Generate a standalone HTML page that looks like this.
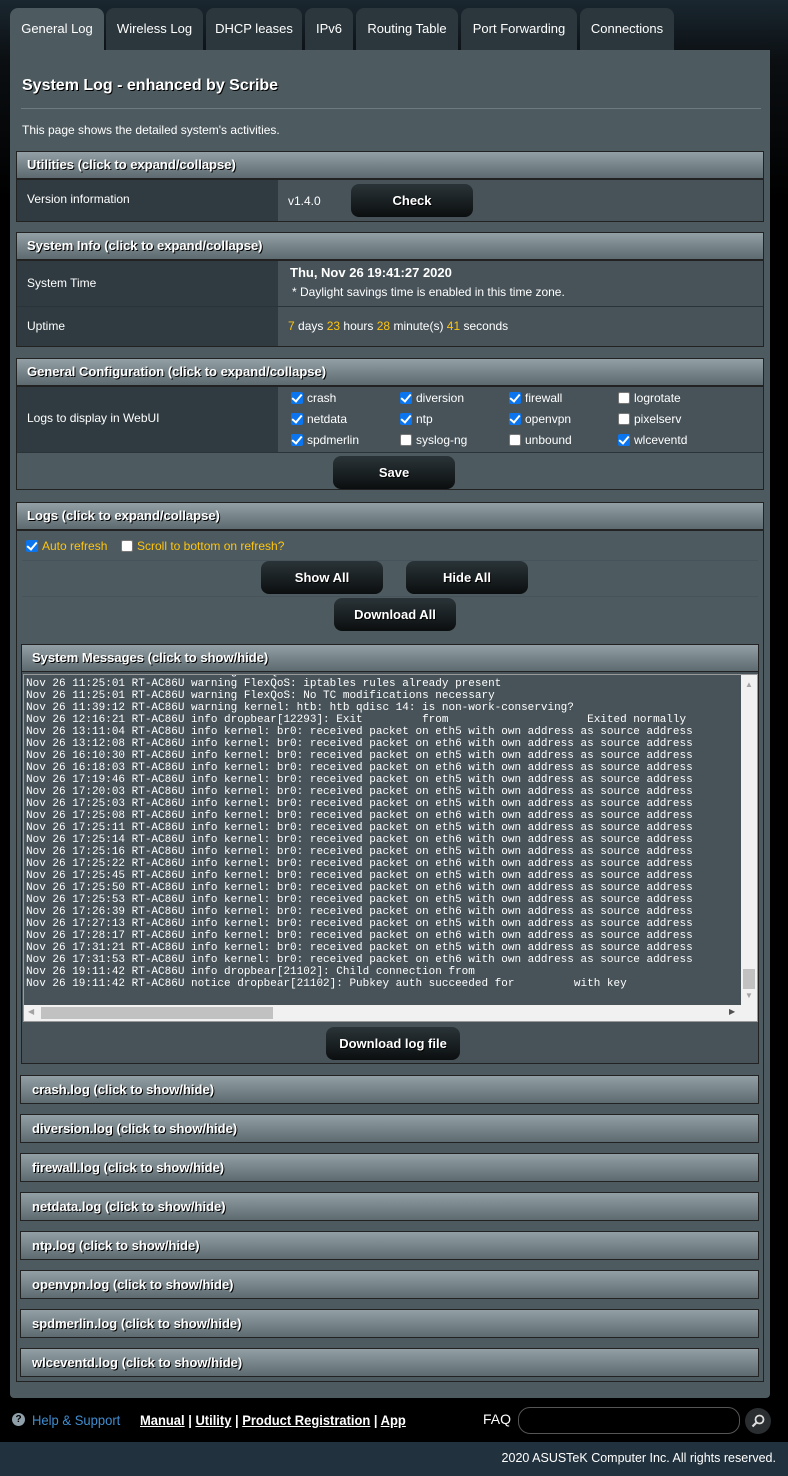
<!DOCTYPE html>
<html><head><meta charset="utf-8"><style>
*{box-sizing:border-box;margin:0;padding:0}
body{width:788px;height:1476px;background:#21313d;font-family:"Liberation Sans",Arial,sans-serif;color:#fff;position:relative;overflow:hidden}
.a{position:absolute}
.bgtop{left:0;top:0;width:788px;height:1442px;background:linear-gradient(180deg,#1a2730 0,#0b0f12 60px,#000 200px)}
.tab{top:8px;height:42px;background:#2b373c;border-radius:8px 8px 0 0;font-size:13px;line-height:42px;text-align:center;color:#fff}
.tab.on{background:#4d5a5f}
.main{left:10px;top:50px;width:760px;height:1348px;background:#4d5a5f;border-radius:0 0 4px 4px}
.hd{height:28px;background:linear-gradient(180deg,#929fa4,#5d6b71);border:1px solid #222;font-weight:bold;font-size:13px;line-height:26px;padding-left:10px;text-shadow:1px 1px 0 #000}
.box{border:1px solid #222}
.lc{background:#2f3b40;font-size:12px}
.rc{background:#475359;font-size:12px}
.btn{background:linear-gradient(180deg,#2a3438,#0b0e0f);border-radius:8px;font-weight:bold;font-size:13px;text-align:center;color:#fff;text-shadow:1px 1px 0 #000}
.cb{width:12px;height:12px;border-radius:2px;background:#0b75f0;display:inline-block;vertical-align:-2px;margin-right:4px;position:relative}
.cb:after{content:"";position:absolute;left:3px;top:0px;width:4px;height:8px;border:solid #fff;border-width:0 2px 2px 0;transform:rotate(40deg)}
.cb.off{background:#fff;border:1px solid #777}
.cb.off:after{display:none}
.ck{font-size:12px;position:absolute}
.log{font-family:"Liberation Mono",monospace;font-size:11px;line-height:12px;white-space:pre;color:#fff}
.bar{left:20px;width:739px;height:29px;background:linear-gradient(180deg,#929fa4,#5d6b71);border:1px solid #222;font-weight:bold;font-size:13px;line-height:27px;padding-left:11px;text-shadow:1px 1px 0 #000}
.y{color:#ffc40c}
u{color:#fff}
</style></head><body>
<div class="a bgtop"></div>
<div class="a tab on" style="left:10px;width:94px">General Log</div>
<div class="a tab" style="left:106px;width:97px">Wireless Log</div>
<div class="a tab" style="left:206px;width:96px">DHCP leases</div>
<div class="a tab" style="left:305px;width:48px">IPv6</div>
<div class="a tab" style="left:356px;width:102px">Routing Table</div>
<div class="a tab" style="left:461px;width:116px">Port Forwarding</div>
<div class="a tab" style="left:580px;width:94px">Connections</div>
<div class="a main"></div>
<div class="a" style="left:22px;top:77px;font-size:16px;font-weight:bold;text-shadow:1px 1px 0 #000">System Log - enhanced by Scribe</div>
<div class="a" style="left:21px;top:108px;width:740px;height:1px;background:#6d7a80"></div>
<div class="a" style="left:22px;top:123px;font-size:12px">This page shows the detailed system's activities.</div>

<div class="a hd" style="left:16px;top:151px;width:748px">Utilities (click to expand/collapse)</div>
<div class="a box" style="left:16px;top:179px;width:748px;height:43px;background:#475359"></div>
<div class="a lc" style="left:17px;top:180px;width:261px;height:41px;line-height:38px;padding-left:10px">Version information</div>
<div class="a" style="left:288px;top:194px;font-size:12px">v1.4.0</div>
<div class="a btn" style="left:351px;top:184px;width:122px;height:33px;line-height:33px">Check</div>

<div class="a hd" style="left:16px;top:232px;width:748px">System Info (click to expand/collapse)</div>
<div class="a box" style="left:16px;top:260px;width:748px;height:87px;background:#475359"></div>
<div class="a lc" style="left:17px;top:261px;width:261px;height:45px;line-height:44px;padding-left:10px">System Time</div>
<div class="a lc" style="left:17px;top:307px;width:261px;height:39px;line-height:38px;padding-left:10px">Uptime</div>
<div class="a" style="left:17px;top:306px;width:746px;height:1px;background:#2a3438"></div>
<div class="a" style="left:290px;top:265px;font-size:13px;font-weight:bold">Thu, Nov 26 19:41:27 2020</div>
<div class="a" style="left:292px;top:285px;font-size:12px">* Daylight savings time is enabled in this time zone.</div>
<div class="a" style="left:288px;top:319px;font-size:12px"><span class="y">7</span> days <span class="y">23</span> hours <span class="y">28</span> minute(s) <span class="y">41</span> seconds</div>

<div class="a hd" style="left:16px;top:358px;width:748px">General Configuration (click to expand/collapse)</div>
<div class="a box" style="left:16px;top:386px;width:748px;height:104px;background:#4d5a5f"></div>
<div class="a lc" style="left:17px;top:387px;width:261px;height:65px;line-height:62px;padding-left:10px">Logs to display in WebUI</div>
<div class="a rc" style="left:278px;top:387px;width:485px;height:65px"></div>
<div class="a" style="left:17px;top:452px;width:746px;height:1px;background:#2a3438"></div>
<div class="ck" style="left:291px;top:391px"><span class="cb"></span>crash</div>
<div class="ck" style="left:400px;top:391px"><span class="cb"></span>diversion</div>
<div class="ck" style="left:509px;top:391px"><span class="cb"></span>firewall</div>
<div class="ck" style="left:618px;top:391px"><span class="cb off"></span>logrotate</div>
<div class="ck" style="left:291px;top:412px"><span class="cb"></span>netdata</div>
<div class="ck" style="left:400px;top:412px"><span class="cb"></span>ntp</div>
<div class="ck" style="left:509px;top:412px"><span class="cb"></span>openvpn</div>
<div class="ck" style="left:618px;top:412px"><span class="cb off"></span>pixelserv</div>
<div class="ck" style="left:291px;top:433px"><span class="cb"></span>spdmerlin</div>
<div class="ck" style="left:400px;top:433px"><span class="cb off"></span>syslog-ng</div>
<div class="ck" style="left:509px;top:433px"><span class="cb off"></span>unbound</div>
<div class="ck" style="left:618px;top:433px"><span class="cb"></span>wlceventd</div>
<div class="a btn" style="left:333px;top:456px;width:122px;height:33px;line-height:33px">Save</div>

<div class="a hd" style="left:16px;top:502px;width:748px">Logs (click to expand/collapse)</div>
<div class="a box" style="left:16px;top:530px;width:748px;height:852px;background:#4d5a5f"></div>
<div class="ck y" style="left:26px;top:539px"><span class="cb"></span>Auto refresh</div>
<div class="ck y" style="left:121px;top:539px"><span class="cb off"></span>Scroll to bottom on refresh?</div>
<div class="a" style="left:22px;top:560px;width:736px;height:37px;border:1px solid #46535a;border-left:none;border-right:none"></div>
<div class="a btn" style="left:261px;top:561px;width:122px;height:33px;line-height:33px">Show All</div>
<div class="a btn" style="left:406px;top:561px;width:122px;height:33px;line-height:33px">Hide All</div>
<div class="a btn" style="left:334px;top:598px;width:122px;height:33px;line-height:33px">Download All</div>

<div class="a hd" style="left:21px;top:644px;width:738px">System Messages (click to show/hide)</div>
<div class="a" style="left:21px;top:672px;width:738px;height:392px;border:1px solid #222;border-top:none;background:#475359"></div>
<div class="a" style="left:23px;top:674px;width:735px;height:348px;border:1px solid #999;background:#475359;overflow:hidden">
<div class="a log" style="left:2px;top:-9px">Nov 26 11:24:59 RT-AC86U warning FlexQoS: xxxxxxxx xxxxx xxxxxxx xxxxxxx xxxxxxxx xxxxxxx
Nov 26 11:25:01 RT-AC86U warning FlexQoS: iptables rules already present
Nov 26 11:25:01 RT-AC86U warning FlexQoS: No TC modifications necessary
Nov 26 11:39:12 RT-AC86U warning kernel: htb: htb qdisc 14: is non-work-conserving?
Nov 26 12:16:21 RT-AC86U info dropbear[12293]: Exit         from                     Exited normally
Nov 26 13:11:04 RT-AC86U info kernel: br0: received packet on eth5 with own address as source address
Nov 26 13:12:08 RT-AC86U info kernel: br0: received packet on eth6 with own address as source address
Nov 26 16:10:30 RT-AC86U info kernel: br0: received packet on eth5 with own address as source address
Nov 26 16:18:03 RT-AC86U info kernel: br0: received packet on eth6 with own address as source address
Nov 26 17:19:46 RT-AC86U info kernel: br0: received packet on eth5 with own address as source address
Nov 26 17:20:03 RT-AC86U info kernel: br0: received packet on eth5 with own address as source address
Nov 26 17:25:03 RT-AC86U info kernel: br0: received packet on eth5 with own address as source address
Nov 26 17:25:08 RT-AC86U info kernel: br0: received packet on eth6 with own address as source address
Nov 26 17:25:11 RT-AC86U info kernel: br0: received packet on eth5 with own address as source address
Nov 26 17:25:14 RT-AC86U info kernel: br0: received packet on eth6 with own address as source address
Nov 26 17:25:16 RT-AC86U info kernel: br0: received packet on eth5 with own address as source address
Nov 26 17:25:22 RT-AC86U info kernel: br0: received packet on eth6 with own address as source address
Nov 26 17:25:45 RT-AC86U info kernel: br0: received packet on eth5 with own address as source address
Nov 26 17:25:50 RT-AC86U info kernel: br0: received packet on eth6 with own address as source address
Nov 26 17:25:53 RT-AC86U info kernel: br0: received packet on eth5 with own address as source address
Nov 26 17:26:39 RT-AC86U info kernel: br0: received packet on eth6 with own address as source address
Nov 26 17:27:13 RT-AC86U info kernel: br0: received packet on eth5 with own address as source address
Nov 26 17:28:17 RT-AC86U info kernel: br0: received packet on eth6 with own address as source address
Nov 26 17:31:21 RT-AC86U info kernel: br0: received packet on eth5 with own address as source address
Nov 26 17:31:53 RT-AC86U info kernel: br0: received packet on eth6 with own address as source address
Nov 26 19:11:42 RT-AC86U info dropbear[21102]: Child connection from
Nov 26 19:11:42 RT-AC86U notice dropbear[21102]: Pubkey auth succeeded for         with key</div>
<div class="a" style="left:717px;top:0;width:17px;height:330px;background:#f1f1f1"></div>
<div class="a" style="left:719px;top:294px;width:12px;height:20px;background:#c1c1c1"></div>
<div class="a" style="left:721px;top:5px;font-size:8px;color:#a3a3a3">▲</div>
<div class="a" style="left:721px;top:316px;font-size:8px;color:#a3a3a3">▼</div>
<div class="a" style="left:0;top:330px;width:734px;height:17px;background:#f1f1f1"></div>
<div class="a" style="left:17px;top:332px;width:232px;height:12px;background:#c1c1c1"></div>
<div class="a" style="left:4px;top:332px;font-size:8px;color:#a3a3a3">◀</div>
<div class="a" style="left:705px;top:332px;font-size:8px;color:#505050">▶</div>
</div>
<div class="a btn" style="left:326px;top:1027px;width:134px;height:33px;line-height:33px">Download log file</div>

<div class="a bar" style="top:1075px">crash.log (click to show/hide)</div>
<div class="a bar" style="top:1114px">diversion.log (click to show/hide)</div>
<div class="a bar" style="top:1153px">firewall.log (click to show/hide)</div>
<div class="a bar" style="top:1192px">netdata.log (click to show/hide)</div>
<div class="a bar" style="top:1231px">ntp.log (click to show/hide)</div>
<div class="a bar" style="top:1270px">openvpn.log (click to show/hide)</div>
<div class="a bar" style="top:1309px">spdmerlin.log (click to show/hide)</div>
<div class="a bar" style="top:1348px">wlceventd.log (click to show/hide)</div>

<div class="a" style="left:0;top:1398px;width:788px;height:44px;background:#000"></div>
<div class="a" style="left:12px;top:1413px;width:13px;height:13px;border-radius:50%;background:#8fa0aa;color:#000;font-size:10px;font-weight:bold;text-align:center;line-height:13px">?</div>
<div class="a" style="left:32px;top:1412px;font-size:14px;color:#3f8dd0;transform:scaleX(.93);transform-origin:left">Help &amp; Support</div>
<div class="a" style="left:140px;top:1412px;font-size:14px;font-weight:bold;color:#fff;transform:scaleX(.925);transform-origin:left;white-space:nowrap"><u>Manual</u> | <u>Utility</u> | <u>Product Registration</u> | <u>App</u></div>
<div class="a" style="left:483px;top:1411px;font-size:14px">FAQ</div>
<div class="a" style="left:518px;top:1407px;width:222px;height:27px;border-radius:12px;border:1px solid #555;background:#000"></div>
<div class="a" style="left:745px;top:1408px;width:26px;height:26px;border-radius:50%;background:#2a2e30"></div>
<svg class="a" style="left:750px;top:1413px" width="16" height="16" viewBox="0 0 16 16"><circle cx="9.5" cy="6.5" r="4" fill="none" stroke="#ddd" stroke-width="1.8"/><path d="M6.5 9.5L2.5 13.5" stroke="#ddd" stroke-width="2.2"/></svg>
<div class="a" style="right:12px;top:1451px;font-size:12.5px;color:#fff;white-space:nowrap">2020 ASUSTeK Computer Inc. All rights reserved.</div>
</body></html>
